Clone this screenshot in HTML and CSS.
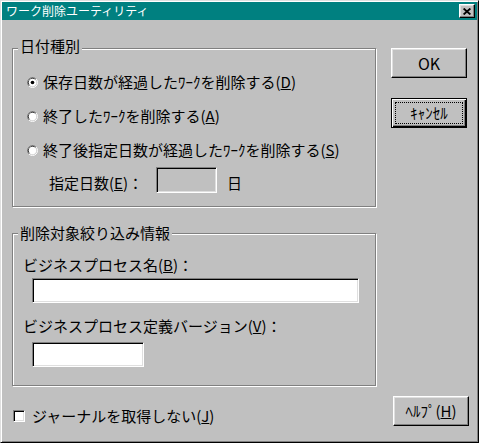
FILE: index.html
```html
<!DOCTYPE html>
<html lang="ja">
<head>
<meta charset="utf-8">
<title>ワーク削除ユーティリティ</title>
<link rel="stylesheet" href="styles.css">
</head>
<body>
<div class="window">
  <div class="titlebar">
    <span class="title">ワーク削除ユーティリティ</span>
    <span class="close-btn"><svg width="8" height="7" viewBox="0 0 8 7"><path d="M0.6 0.5 7.4 6.5 M7.4 0.5 0.6 6.5" stroke="#000" stroke-width="1.8" fill="none"/></svg></span>
  </div>
  <div class="main">
    <div class="left">
      <div class="group group-date">
        <div class="group-title">日付種別</div>
        <div class="radio-list">
          <div class="radio-row">
            <svg class="radio" viewBox="0 0 12 12"><path d="M2.11 9.89A5.5 5.5 0 0 1 9.89 2.11" stroke="#808080" fill="none"/><path d="M9.89 2.11A5.5 5.5 0 0 1 2.11 9.89" stroke="#fff" fill="none"/><path d="M2.82 9.18A4.5 4.5 0 0 1 9.18 2.82" stroke="#000" fill="none"/><path d="M9.18 2.82A4.5 4.5 0 0 1 2.82 9.18" stroke="#dfdfdf" fill="none"/><circle cx="6" cy="6" r="4" fill="#fff"/><circle cx="6" cy="6" r="2" fill="#000"/></svg>
            <span>保存日数が経過したﾜｰｸを削除する(<u>D</u>)</span>
          </div>
          <div class="radio-row">
            <svg class="radio" viewBox="0 0 12 12"><path d="M2.11 9.89A5.5 5.5 0 0 1 9.89 2.11" stroke="#808080" fill="none"/><path d="M9.89 2.11A5.5 5.5 0 0 1 2.11 9.89" stroke="#fff" fill="none"/><path d="M2.82 9.18A4.5 4.5 0 0 1 9.18 2.82" stroke="#000" fill="none"/><path d="M9.18 2.82A4.5 4.5 0 0 1 2.82 9.18" stroke="#dfdfdf" fill="none"/><circle cx="6" cy="6" r="4" fill="#fff"/></svg>
            <span>終了したﾜｰｸを削除する(<u>A</u>)</span>
          </div>
          <div class="radio-row">
            <svg class="radio" viewBox="0 0 12 12"><path d="M2.11 9.89A5.5 5.5 0 0 1 9.89 2.11" stroke="#808080" fill="none"/><path d="M9.89 2.11A5.5 5.5 0 0 1 2.11 9.89" stroke="#fff" fill="none"/><path d="M2.82 9.18A4.5 4.5 0 0 1 9.18 2.82" stroke="#000" fill="none"/><path d="M9.18 2.82A4.5 4.5 0 0 1 2.82 9.18" stroke="#dfdfdf" fill="none"/><circle cx="6" cy="6" r="4" fill="#fff"/></svg>
            <span>終了後指定日数が経過したﾜｰｸを削除する(<u>S</u>)</span>
          </div>
        </div>
        <div class="days-row">
          <span class="days-label">指定日数(<u>E</u>)：</span>
          <span class="input input-days"></span>
          <span class="unit">日</span>
        </div>
      </div>
      <div class="group group-filter">
        <div class="group-title">削除対象絞り込み情報</div>
        <div class="field-label first">ビジネスプロセス名(<u>B</u>)：</div>
        <div class="input input-name"></div>
        <div class="field-label second">ビジネスプロセス定義バージョン(<u>V</u>)：</div>
        <div class="input input-version"></div>
      </div>
      <div class="check-row">
        <span class="checkbox"></span>
        <span>ジャーナルを取得しない(<u>J</u>)</span>
      </div>
    </div>
    <div class="right">
      <div class="btn btn-ok">OK</div>
      <div class="btn btn-default"><span class="focus">ｷｬﾝｾﾙ</span></div>
      <div class="btn btn-help">ﾍﾙﾌﾟ(<u>H</u>)</div>
    </div>
  </div>
</div>
</body>
</html>
```
FILE: styles.css
```css
* { box-sizing: border-box; }
html, body { margin: 0; padding: 0; }
body {
  width: 479px;
  height: 443px;
  background: #c0c0c0;
  font-family: "Noto Sans CJK JP", "Noto Sans", sans-serif;
  font-size: 15px;
  line-height: 16px;
  color: #000;
}
u { text-underline-offset: 1px; }
.window {
  width: 479px;
  height: 443px;
  border: 1px solid;
  border-color: #dfdfdf #000 #000 #dfdfdf;
  padding: 1px;
  box-shadow: inset 1px 1px #fff, inset -1px -1px #808080;
  background: #c0c0c0;
  display: flex;
  flex-direction: column;
}
.titlebar {
  flex: none;
  height: 18px;
  background: #008080;
  color: #fff;
  display: flex;
  align-items: center;
  justify-content: space-between;
  padding: 0 2px 0 4px;
  font-size: 12px;
  line-height: 14px;
}
.close-btn {
  width: 16px;
  height: 14px;
  background: #c0c0c0;
  border: 1px solid;
  border-color: #fff #000 #000 #fff;
  box-shadow: inset -1px -1px #808080, inset 1px 1px #dfdfdf;
  display: flex;
  align-items: center;
  justify-content: center;
}
.close-btn svg { display: block; }
.main {
  flex: 1;
  display: flex;
  padding-left: 10px;
}
.left {
  flex: none;
  width: 364px;
  display: flex;
  flex-direction: column;
  padding-top: 28px;
}
.group {
  border: 1px solid #808080;
  box-shadow: inset 1px 1px #fff, 1px 1px #fff;
}
.group-title {
  width: fit-content;
  margin-left: 5px;
  padding: 0 2px;
  background: #c0c0c0;
}
.group-date { padding-bottom: 13px; }
.group-date .group-title { margin-top: -11px; }
.radio-list { margin-top: 11px; padding-left: 14px; }
.radio-row {
  height: 34px;
  display: flex;
  align-items: center;
  gap: 5px;
  white-space: nowrap;
}
.radio { width: 11px; height: 11px; flex: none; display: block; }
.days-row {
  display: flex;
  align-items: flex-end;
  padding-left: 36px;
}
.days-label { margin-bottom: 2px; white-space: nowrap; }
.input {
  display: block;
  height: 25px;
  background: #fff;
  border: 1px solid;
  border-color: #808080 #fff #fff #808080;
  box-shadow: inset 1px 1px #000, inset -1px -1px #dfdfdf;
}
.input-days {
  width: 61px;
  height: 26px;
  margin-left: 13px;
  background: #c0c0c0;
}
.unit { margin-left: 10px; margin-bottom: 2px; }
.group-filter { margin-top: 26px; padding-bottom: 18px; }
.group-filter .group-title { margin-top: -9px; }
.field-label { margin-left: 10px; white-space: nowrap; }
.field-label.first { margin-top: 16px; }
.field-label.second { margin-top: 15px; }
.input-name { margin: 5px 0 0 19px; width: 327px; }
.input-version { margin: 8px 0 0 19px; width: 112px; }
.check-row {
  margin-top: 22px;
  display: flex;
  align-items: center;
  gap: 7px;
  white-space: nowrap;
}
.checkbox {
  width: 12px;
  height: 12px;
  margin-left: 1px;
  background: #fff;
  border: 1px solid;
  border-color: #808080 #fff #fff #808080;
  box-shadow: inset 1px 1px #000, inset -1px -1px #dfdfdf;
}
.right {
  flex: none;
  width: 78px;
  margin-left: 15px;
  padding-top: 28px;
  display: flex;
  flex-direction: column;
}
.btn {
  width: 76px;
  height: 30px;
  background: #c0c0c0;
  border: 1px solid;
  border-color: #fff #000 #000 #fff;
  box-shadow: inset -1px -1px #808080, inset 1px 1px #dfdfdf;
  display: flex;
  align-items: center;
  justify-content: center;
  white-space: nowrap;
}
.btn-ok { font-size: 16px; }
.btn-default {
  margin-top: 20px;
  border-color: #000;
  box-shadow: inset 1px 1px #fff, inset -1px -1px #000, inset -2px -2px #808080;
  padding: 3px 3px 3px 3px;
  align-items: stretch;
}
.focus {
  flex: 1;
  border: 1px dotted #000;
  display: flex;
  align-items: center;
  justify-content: center;
}
.btn-help {
  margin-top: auto;
  margin-bottom: 15px;
  margin-left: 2px;
}
```
